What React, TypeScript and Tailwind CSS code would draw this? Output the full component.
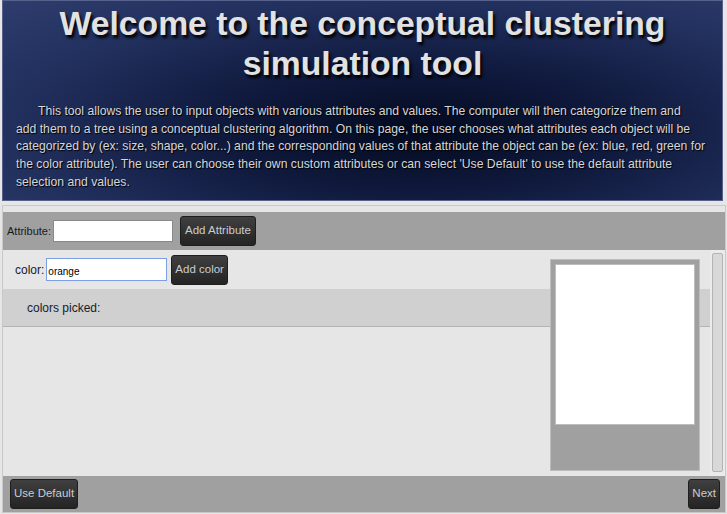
export default function App() {
  const font = { fontFamily: '"Liberation Sans", Arial, sans-serif' };

  return (
    <div
      className="flex h-[514px] w-[727px] flex-col overflow-hidden bg-[#e6e6e6]"
      style={font}
    >
      {/* Header */}
      <header className="ml-[2px] h-[201px] w-[721px] border border-[#56628c] bg-[radial-gradient(ellipse_at_58%_65%,#030a1f_0%,#101a3e_35%,#22305e_70%,#2f3d6e_100%)]">
        <h1 className="mt-[2px] text-center text-[33.7px] leading-[40px] font-bold text-[#e2e2e2] [text-shadow:2px_3px_3px_#000]">
          Welcome to the conceptual clustering
          <br />
          simulation tool
        </h1>
        <p className="mt-[20px] pl-[13px] indent-[22px] text-[12.2px] leading-[17.7px] whitespace-nowrap text-[#d6d6d6] [text-shadow:1px_1px_1px_#000]">
          This tool allows the user to input objects with various attributes and values. The computer will then
          categorize them and
          <br />
          add them to a tree using a conceptual clustering algorithm. On this page, the user chooses what attributes
          each object will be
          <br />
          categorized by (ex: size, shape, color...) and the corresponding values of that attribute the object can be
          (ex: blue, red, green for
          <br />
          the color attribute). The user can choose their own custom attributes or can select 'Use Default' to use
          the default attribute
          <br />
          selection and values.
        </p>
      </header>

      {/* Main box */}
      <div className="mt-[4px] ml-[2px] flex h-[308px] w-[724px] flex-col border border-[#c9c9c9] pt-[6px]">
        {/* Attribute bar */}
        <div className="flex h-[38px] items-center bg-[#a0a0a0] pl-[4px]">
          <span className="text-[11px] text-[#1a1a1a]">Attribute:</span>
          <input className="ml-[2px] h-[22px] w-[120px] border border-[#8a8a8a] bg-white outline-none" />
          <button className="ml-[7px] h-[30px] rounded-[3px] border border-[#1e1e1e] bg-gradient-to-b from-[#404040] to-[#242424] px-[4px] text-[11.5px] text-[#c9ccd2]">
            Add Attribute
          </button>
        </div>

        {/* Content */}
        <div className="flex h-[226px]">
          <div className="relative flex-1">
            <div className="flex h-[39px] items-center pl-[12px]">
              <span className="text-[12px] text-[#1a1a2a]">color:</span>
              <input
                defaultValue="orange"
                className="ml-[2px] h-[23px] w-[121px] border border-[#7b9fe0] bg-white pt-[3px] pl-[1px] text-[10px] text-black outline-none"
              />
              <button className="ml-[4px] h-[30px] rounded-[3px] border border-[#1e1e1e] bg-gradient-to-b from-[#404040] to-[#242424] px-[3px] text-[11.5px] text-[#c9ccd2]">
                Add color
              </button>
            </div>
            <div className="flex h-[38px] items-center border-b border-[#b3b3b3] bg-[#d0d0d0] pl-[24px]">
              <span className="text-[12px] text-[#1a1a2a]">colors picked:</span>
            </div>

            {/* Preview panel */}
            <div className="absolute top-[9px] left-[547px] h-[212px] w-[150px] border border-[#bdbdbd] bg-[#a0a0a0] p-[4px]">
              <div className="h-[161px] w-full border border-[#bdbdbd] bg-white" />
            </div>
          </div>

          {/* Scrollbar */}
          <div className="w-[15px] bg-[#ebebeb] pt-[3px] pl-[2px]">
            <div className="h-[219px] w-[11px] rounded-[2px] border border-[#b4b4b4] bg-[#d8d8d8]" />
          </div>
        </div>

        {/* Footer */}
        <div className="flex h-[36px] items-center justify-between bg-[#a0a0a0] pr-[5px] pl-[7px]">
          <button className="h-[30px] rounded-[3px] border border-[#1e1e1e] bg-gradient-to-b from-[#404040] to-[#242424] px-[3px] text-[11.5px] text-[#c9ccd2]">
            Use Default
          </button>
          <button className="h-[30px] rounded-[3px] border border-[#1e1e1e] bg-gradient-to-b from-[#404040] to-[#242424] px-[3px] text-[11.5px] text-[#c9ccd2]">
            Next
          </button>
        </div>
      </div>
    </div>
  );
}
